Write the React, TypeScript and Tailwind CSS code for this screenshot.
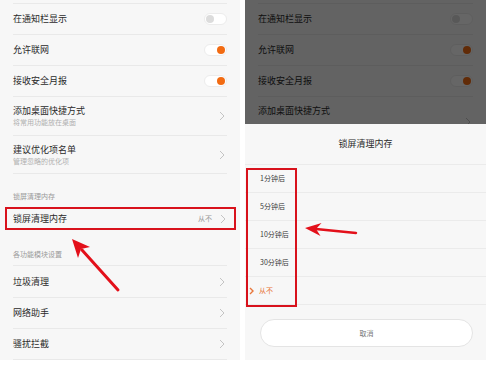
import React from "react";

const font = { fontFamily: '"Noto Sans CJK SC", "Noto Sans", sans-serif' };

function Chevron({ color = "#c4c4c4", w = 1 }: { color?: string; w?: number }) {
  return (
    <svg width="6" height="10" viewBox="0 0 6 10" className="shrink-0">
      <polyline points="1,1 5,5 1,9" fill="none" stroke={color} strokeWidth={w} />
    </svg>
  );
}

function Toggle({ on }: { on: boolean }) {
  return (
    <div className="w-[23px] h-[12px] rounded-full border border-[#ececec] bg-white flex items-center px-[1px] shrink-0"
      style={{ justifyContent: on ? "flex-end" : "flex-start" }}>
      <div className={on ? "w-[8px] h-[8px] rounded-full bg-[#f26b12]" : "w-[8px] h-[8px] rounded-full bg-[#dcdcdc]"} />
    </div>
  );
}

function ToggleRow({ title, on }: { title: string; on: boolean }) {
  return (
    <div className="h-[31px] flex items-center justify-between border-b border-[#e9e9e9]">
      <span className="text-[9px] text-[#2a2a2a]">{title}</span>
      <Toggle on={on} />
    </div>
  );
}

function TwoLineRow({ title, sub, h }: { title: string; sub: string; h: string }) {
  return (
    <div className={`${h} flex items-center justify-between border-b border-[#e9e9e9]`}>
      <div className="flex flex-col leading-none">
        <span className="text-[9px] text-[#2a2a2a] leading-[12px]">{title}</span>
        <span className="text-[7px] text-[#b0b0b0] leading-[10px]">{sub}</span>
      </div>
      <div className="mr-[2px]"><Chevron /></div>
    </div>
  );
}

function LinkRow({ title, h = "h-[31px]" }: { title: string; h?: string }) {
  return (
    <div className={`${h} flex items-center justify-between border-b border-[#e9e9e9]`}>
      <span className="text-[9px] text-[#2a2a2a]">{title}</span>
      <div className="mr-[2px]"><Chevron /></div>
    </div>
  );
}

function Settings({ boxed, partial }: { boxed: boolean; partial?: boolean }) {
  return (
    <div className="h-[360px] bg-[#f7f7f7] overflow-hidden flex flex-col">
      <div className="mx-[13px] flex flex-col">
        <div className="h-[4px] border-b border-[#e9e9e9]" />
        <ToggleRow title="在通知栏显示" on={false} />
        <ToggleRow title="允许联网" on={true} />
        <ToggleRow title="接收安全月报" on={true} />
        {partial ? (
          <div className="h-[27px] flex items-start justify-between pt-[8px]">
            <span className="text-[9px] text-[#2a2a2a] leading-[12px]">添加桌面快捷方式</span>
            <div className="mr-[2px] mt-[12px]"><Chevron /></div>
          </div>
        ) : (
          <TwoLineRow title="添加桌面快捷方式" sub="将常用功能放在桌面" h="h-[39px]" />
        )}
        {!partial && <TwoLineRow title="建议优化项名单" sub="管理忽略的优化项" h="h-[38px]" />}
        {!partial && (
          <div className="h-[33px] flex items-end pb-[7px]">
            <span className="text-[7px] text-[#9a9a9a] leading-none">锁屏清理内存</span>
          </div>
        )}
      </div>
      {!partial && (
        <>
          <div className={boxed ? "mx-[5px] w-[231px] h-[26px] border-2 border-[#d8121c] flex items-center justify-between pl-[6px] pr-[8px]" : "mx-[5px] w-[231px] h-[26px] border-2 border-transparent flex items-center justify-between pl-[6px] pr-[8px]"}>
            <span className="text-[9px] text-[#2a2a2a]">锁屏清理内存</span>
            <div className="flex items-center gap-[8px]">
              <span className="text-[7px] text-[#9a9a9a]">从不</span>
              <Chevron />
            </div>
          </div>
          <div className="mx-[13px] flex flex-col">
            <div className="h-[36px] flex items-end pb-[7px] border-b border-[#e9e9e9]">
              <span className="text-[7px] text-[#9a9a9a] leading-none">各功能模块设置</span>
            </div>
            <LinkRow title="垃圾清理" h="h-[32px]" />
            <LinkRow title="网络助手" />
            <LinkRow title="骚扰拦截" />
          </div>
        </>
      )}
    </div>
  );
}

const options = ["1分钟后", "5分钟后", "10分钟后", "30分钟后"];

export default function App() {
  return (
    <div className="w-[499px] h-[373px] bg-white relative overflow-hidden" style={font}>
      <div className="flex gap-[5px]">
        <div className="w-[240px]">
          <Settings boxed={true} />
        </div>
        <div className="w-[241px] relative h-[360px] overflow-hidden">
          <Settings boxed={false} partial={true} />
          <div className="absolute inset-0 bg-black/60" />
          <div className="absolute left-0 right-0 top-[124px] bottom-0 bg-[#f7f7f7] flex flex-col">
            <div className="h-[41px] shrink-0 flex items-center justify-center border-b border-[#ebebeb]">
              <span className="text-[9px] text-[#2a2a2a]">锁屏清理内存</span>
            </div>
            {options.map((o) => (
              <div key={o} className="h-[28px] shrink-0 flex items-center pl-[15px] border-b border-[#ebebeb]">
                <span className="text-[7px] text-[#3a3a3a]">{o}</span>
              </div>
            ))}
            <div className="h-[28px] shrink-0 flex items-center pl-[4px] gap-[5px] border-b border-[#ebebeb]">
              <svg width="5" height="8" viewBox="0 0 5 8" className="shrink-0">
                <polyline points="1,1 4,4 1,7" fill="none" stroke="#e8763a" strokeWidth="1.4" />
              </svg>
              <span className="text-[7px] text-[#e8763a]">从不</span>
            </div>
            <div className="mt-[14px] ml-[15px] mr-[13px] h-[28px] rounded-full border border-[#e4e4e4] bg-white flex items-center justify-center">
              <span className="text-[7px] text-[#777]">取消</span>
            </div>
            <div className="absolute left-[1px] top-[44px] w-[51px] h-[139px] border-[2.5px] border-[#d8121c]" />
          </div>
        </div>
      </div>
      <svg className="absolute inset-0 pointer-events-none" width="499" height="373" viewBox="0 0 499 373">
        <line x1="118" y1="290" x2="82" y2="250" stroke="#e3101a" strokeWidth="3" strokeLinecap="round" />
        <polygon points="72,239 90,247 81,249 78,258" fill="#e3101a" />
        <line x1="356" y1="233" x2="316" y2="229" stroke="#e3101a" strokeWidth="2.5" strokeLinecap="round" />
        <polygon points="305,228 321.5,223 316,229 320.5,236" fill="#e3101a" />
      </svg>
    </div>
  );
}
